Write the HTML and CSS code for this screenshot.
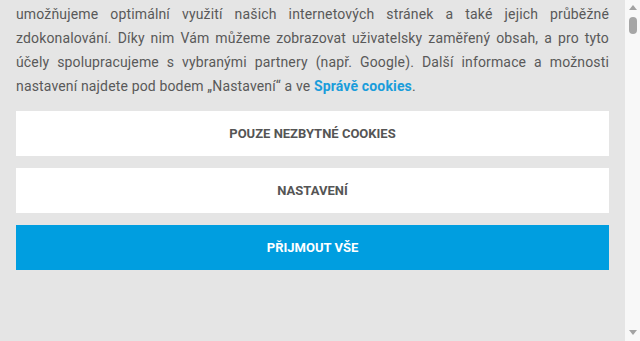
FILE: index.html
```html
<!DOCTYPE html>
<html lang="cs">
<head>
<meta charset="utf-8">
<title>Cookies</title>
<link rel="stylesheet" href="styles.css">
</head>
<body>
<div class="window">
  <div class="panel" id="panel">
    <h2 class="title">Používáme cookies</h2>
    <p class="text" id="text">Tento web používá soubory cookies a další technologie, pomocí kterých Vám<br>umožňujeme optimální využití našich internetových stránek a také jejich průběžné zdokonalování. Díky nim Vám můžeme zobrazovat uživatelsky zaměřený obsah, a pro tyto účely spolupracujeme s vybranými partnery (např. Google). Další informace a možnosti nastavení najdete pod bodem „Nastavení“ a ve <a class="link" href="#">Správě cookies</a>.</p>
    <div class="actions">
      <button class="btn">Pouze nezbytné cookies</button>
      <button class="btn">Nastavení</button>
      <button class="btn btn-primary">Přijmout vše</button>
    </div>
  </div>
  <div class="scrollbar">
    <span class="arrow arrow-up"></span>
    <span class="thumb"></span>
    <span class="track"></span>
    <span class="arrow arrow-down"></span>
  </div>
</div>
<script>
  var panel = document.getElementById('panel');
  var text = document.getElementById('text');
  panel.scrollTop = text.offsetTop + 24 - 2;
</script>
</body>
</html>
```

FILE: styles.css
```css
html, body {
  margin: 0;
  padding: 0;
  height: 100%;
}
body {
  font-family: Roboto, "Liberation Sans", sans-serif;
  background: #e5e5e5;
}
.window {
  display: flex;
  height: 341px;
}
.panel {
  flex: 1;
  background: #e5e5e5;
  overflow: hidden;
  padding: 0 16px 200px;
}
.title {
  margin: 0;
  padding: 20px 0 10px;
  font-size: 18px;
  color: #555;
}
.text {
  margin: 0;
  font-size: 14px;
  line-height: 24px;
  letter-spacing: 0.15px;
  color: #595959;
  text-align: justify;
}
.link {
  color: #1a9ddb;
  font-weight: 700;
  text-decoration: none;
}
.actions {
  display: flex;
  flex-direction: column;
  gap: 12px;
  margin-top: 13px;
  padding-bottom: 200px;
}
.btn {
  height: 45px;
  border: 0;
  margin: 0;
  background: #fff;
  color: #555;
  font-family: Roboto, "Liberation Sans", sans-serif;
  font-size: 13px;
  font-weight: 700;
  text-transform: uppercase;
  cursor: pointer;
}
.btn-primary {
  background: #009ee0;
  color: #fff;
}
.scrollbar {
  width: 15px;
  background: #f8f8f8;
  display: flex;
  flex-direction: column;
  align-items: center;
  padding: 5px 0 6px;
  box-sizing: border-box;
}
.arrow {
  width: 0;
  height: 0;
  border-left: 4px solid transparent;
  border-right: 4px solid transparent;
}
.arrow-up {
  border-bottom: 5px solid #a3a3a3;
}
.arrow-down {
  border-top: 5px solid #a3a3a3;
}
.thumb {
  width: 8px;
  height: 17px;
  margin-top: 7px;
  border-radius: 4px;
  background: #a6a6a6;
}
.track {
  flex: 1;
}
```
